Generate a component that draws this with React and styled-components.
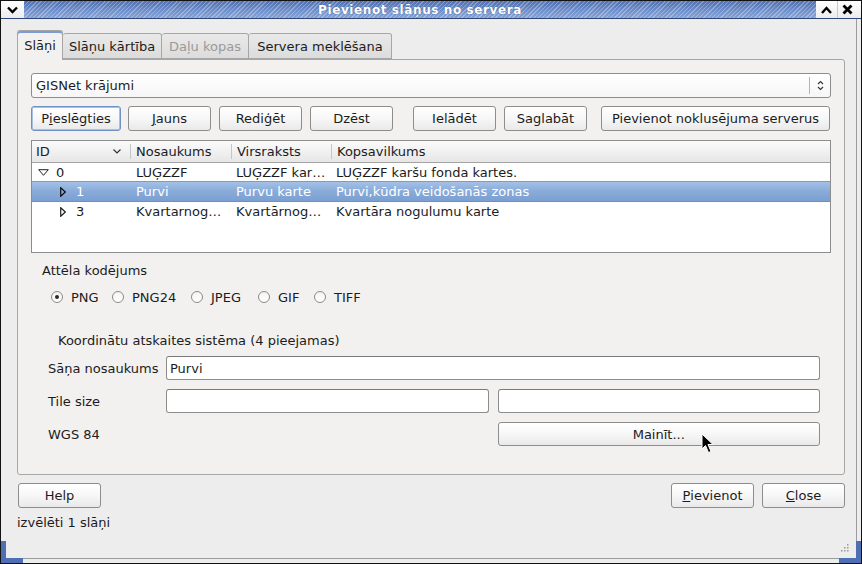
import React from 'react';
import styled, { createGlobalStyle } from 'styled-components';

const GlobalStyle = createGlobalStyle`
  html, body { margin: 0; padding: 0; overflow: hidden; background: #ededed; }
  body {
    font-family: "DejaVu Sans", "Liberation Sans", sans-serif;
    font-size: 13px;
    color: #1c1c1c;
  }
  * { box-sizing: border-box; }
`;

const Window = styled.div`
  position: relative;
  width: 862px;
  height: 564px;
  border: 1px solid #121212;
  background: #ededed;
  display: flex;
  flex-direction: column;
  overflow: hidden;
`;

const TitleBar = styled.div`
  height: 18px;
  display: flex;
  border-bottom: 1px solid #2e4778;
  flex-shrink: 0;
`;

const TitleButton = styled.div`
  width: ${({ $w }) => $w}px;
  height: 100%;
  background: linear-gradient(#ffffff, #ececec);
  display: flex;
  align-items: center;
  justify-content: center;
  border-left: ${({ $sep }) => ($sep ? '1px solid #c8c8c8' : 'none')};
`;

const TitleStripe = styled.div`
  flex: 1;
  display: flex;
  align-items: center;
  justify-content: center;
  color: #fff;
  font-weight: bold;
  font-size: 12px;
  letter-spacing: 0.6px;
  text-shadow: 0 0 1px #2d4a82;
  background:
    repeating-linear-gradient(135deg, rgba(255, 255, 255, 0.28) 0 1px, rgba(255, 255, 255, 0) 1px 3px),
    linear-gradient(#4f70b2, #6f8fcb 55%, #86a2d6);
`;

const Frame = styled.div`
  flex: 1;
  margin: 0 4px 4px 0;
  border-right: 1px solid #9c9c9c;
  border-bottom: 1px solid #9c9c9c;
  padding: 11px 11px 0 16px;
  display: flex;
  flex-direction: column;
`;

const TabBar = styled.div`
  display: flex;
  align-items: flex-end;
  height: 29px;
  position: relative;
  z-index: 1;
`;

const Tab = styled.div`
  height: ${({ $active }) => ($active ? 30 : 26)}px;
  margin-bottom: ${({ $active }) => ($active ? -1 : 0)}px;
  width: ${({ $w }) => $w}px;
  display: flex;
  align-items: center;
  justify-content: center;
  white-space: nowrap;
  border: 1px solid #a6a6a6;
  border-bottom: ${({ $active }) => ($active ? 'none' : '1px solid #a6a6a6')};
  border-left: ${({ $first, $active }) => ($first || $active ? '1px solid #a6a6a6' : 'none')};
  border-radius: 3px 3px 0 0;
  color: ${({ $disabled }) => ($disabled ? '#9a9a9a' : '#1c1c1c')};
  background: ${({ $active }) =>
    $active ? '#f2f1f0' : 'linear-gradient(#e9e9e9, #dcdcdc)'};
  box-shadow: ${({ $active }) => ($active ? 'inset 0 2px 0 #7a9bd3' : 'none')};
`;

const Pane = styled.div`
  height: 416px;
  border: 1px solid #a6a6a6;
  border-radius: 0 3px 3px 3px;
  background: #f2f1f0;
  padding: 13px 13px 0 13px;
  display: flex;
  flex-direction: column;
`;

const Combo = styled.div`
  height: 25px;
  border: 1px solid #8d8d8d;
  border-radius: 3px;
  background: linear-gradient(#ffffff, #f6f6f6);
  display: flex;
  align-items: center;
  padding-left: 4px;
`;

const ComboText = styled.div`
  flex: 1;
`;

const ComboArrow = styled.div`
  width: 21px;
  height: 17px;
  border-left: 1px solid #b4b4b4;
  display: flex;
  align-items: center;
  justify-content: center;
`;

const ButtonRow = styled.div`
  display: flex;
  margin-top: 8px;
`;

const Button = styled.div`
  height: 25px;
  width: ${({ $w }) => ($w ? `${$w}px` : 'auto')};
  margin-left: ${({ $ml }) => $ml || 0}px;
  padding: 0 6px;
  border: 1px solid ${({ $focus }) => ($focus ? '#6f91c6' : '#8d8d8d')};
  box-shadow: ${({ $focus }) => ($focus ? 'inset 0 0 0 1px #a9c0e4' : 'none')};
  border-radius: 3px;
  background: linear-gradient(#ffffff 0%, #f7f7f7 50%, #e9e9e9 100%);
  display: flex;
  align-items: center;
  justify-content: center;
  white-space: nowrap;
  flex-shrink: 0;
`;

const Tree = styled.div`
  margin-top: 9px;
  height: 113px;
  border: 1px solid #8d8d8d;
  background: #fff;
  display: flex;
  flex-direction: column;
`;

const cols = '98px 101px 100px 1fr';

const HeaderRow = styled.div`
  display: grid;
  grid-template-columns: ${cols};
  height: 22px;
  border-bottom: 1px solid #a3a3a3;
  background: linear-gradient(#fbfbfb, #f1f1f1 50%, #e6e6e6);
`;

const HeaderCell = styled.div`
  position: relative;
  display: flex;
  align-items: center;
  justify-content: space-between;
  padding: 0 9px 0 ${({ $first }) => ($first ? 4 : 6)}px;
  &::before {
    content: '';
    display: ${({ $first }) => ($first ? 'none' : 'block')};
    position: absolute;
    left: 0;
    top: 3px;
    bottom: 3px;
    width: 1px;
    background: #c6c6c6;
  }
`;

const Row = styled.div`
  display: grid;
  grid-template-columns: ${cols};
  color: ${({ $sel }) => ($sel ? '#ffffff' : '#1c1c1c')};
  background: ${({ $sel }) => ($sel ? 'linear-gradient(#a4c0e6, #88abd9 50%, #7b9fd1)' : 'transparent')};
  border-top: 1px solid ${({ $sel }) => ($sel ? '#7c9ccc' : 'transparent')};
  border-bottom: 1px solid ${({ $sel }) => ($sel ? '#6e8fc2' : 'transparent')};
  margin-top: ${({ $sel }) => ($sel ? -1 : 0)}px;
  height: ${({ $sel }) => ($sel ? 21 : 19)}px;
`;

const Cell = styled.div`
  display: flex;
  align-items: center;
  padding-left: ${({ $pad }) => $pad}px;
  white-space: nowrap;
  overflow: hidden;
`;

const Expander = styled.span`
  width: 14px;
  display: inline-flex;
  justify-content: center;
  margin-right: 6px;
`;

const GroupLabel = styled.div`
  margin: ${({ $mt }) => $mt}px 0 0 ${({ $ml }) => $ml}px;
  height: 16px;
  line-height: 16px;
`;

const RadioRow = styled.div`
  display: flex;
  margin: 10px 0 0 20px;
  height: 16px;
  align-items: center;
`;

const RadioItem = styled.div`
  width: ${({ $w }) => ($w ? `${$w}px` : 'auto')};
  display: flex;
  align-items: center;
  gap: 8px;
`;

const RadioCircle = styled.span`
  width: 12px;
  height: 12px;
  border-radius: 50%;
  border: 1px solid #8a8a8a;
  background: linear-gradient(#f4f4f4, #ffffff);
  display: flex;
  align-items: center;
  justify-content: center;
  &::after {
    content: '';
    display: ${({ $on }) => ($on ? 'block' : 'none')};
    width: 4px;
    height: 4px;
    border-radius: 50%;
    background: #2a2a2a;
  }
`;

const Form = styled.div`
  display: grid;
  grid-template-columns: 109px 1fr 1fr;
  grid-auto-rows: 24px;
  column-gap: 9px;
  row-gap: 9px;
  margin: 7px 11px 0 17px;
`;

const FormLabel = styled.div`
  display: flex;
  align-items: center;
  white-space: nowrap;
`;

const Input = styled.div`
  grid-column: ${({ $span }) => ($span ? 'span 2' : 'auto')};
  border: 1px solid #8d8d8d;
  border-top-color: #7a7a7a;
  border-radius: 3px;
  background: #fff;
  display: flex;
  align-items: center;
  padding-left: 3px;
`;

const WideButton = styled(Button)`
  grid-column: 3;
  height: 24px;
  position: relative;
`;

const Cursor = styled.svg`
  position: absolute;
  left: 202px;
  top: 10px;
`;

const Footer = styled.div`
  display: flex;
  margin-top: 8px;
  padding-left: 1px;
`;

const Spacer = styled.div`
  flex: 1;
`;

const Status = styled.div`
  margin: 7px 0 0 0;
  height: 16px;
  line-height: 16px;
`;

const Corner = styled.div`
  position: absolute;
  bottom: 0;
  ${({ $side }) => $side}: 0;
  width: 22px;
  height: 22px;
  border-bottom: 5px solid #4f6fb4;
  border-${({ $side }) => $side}: 5px solid #4f6fb4;
`;

const Grip = styled.svg`
  position: absolute;
  right: 11px;
  bottom: 10px;
`;

const Chevron = ({ up }) => (
  <svg width="11" height="8" viewBox="0 0 11 8">
    <path
      d={up ? 'M1 7 L5.5 2 L10 7' : 'M1 1.5 L5.5 6 L10 1.5'}
      fill="none"
      stroke="#000"
      strokeWidth="2.4"
    />
  </svg>
);

const CloseX = () => (
  <svg width="11" height="11" viewBox="0 0 11 11">
    <path d="M1.5 1.5 L9.5 9.5 M9.5 1.5 L1.5 9.5" stroke="#000" strokeWidth="2.8" />
  </svg>
);

const TriDown = () => (
  <svg width="11" height="7" viewBox="0 0 11 7">
    <path d="M0.7 0.7 H10.3 L5.5 6.3 Z" fill="#fff" stroke="#222" strokeWidth="1" />
  </svg>
);

const TriRight = ({ color }) => (
  <svg width="6" height="10" viewBox="0 0 6 10">
    <path d="M0.7 0.7 L5.3 5 L0.7 9.3 Z" fill="none" stroke={color} strokeWidth="1.2" />
  </svg>
);

const rows = [
  { id: '0', depth: 0, open: true, name: 'LUĢZZF', title: 'LUĢZZF kar…', abs: 'LUĢZZF karšu fonda kartes.' },
  { id: '1', depth: 1, name: 'Purvi', title: 'Purvu karte', abs: 'Purvi,kūdra veidošanās zonas', sel: true },
  { id: '3', depth: 1, name: 'Kvartarnog…', title: 'Kvartārnog…', abs: 'Kvartāra nogulumu karte' },
];

const radios = [
  { label: 'PNG', w: 61, on: true },
  { label: 'PNG24', w: 79 },
  { label: 'JPEG', w: 67 },
  { label: 'GIF', w: 56 },
  { label: 'TIFF' },
];

const tabs = [
  { label: 'Slāņi', w: 46, active: true },
  { label: 'Slāņu kārtība', w: 99 },
  { label: 'Daļu kopas', w: 87, disabled: true },
  { label: 'Servera meklēšana', w: 143 },
];

export default function App() {
  return (
    <>
      <GlobalStyle />
      <Window>
        <TitleBar>
          <TitleButton $w={23}>
            <Chevron />
          </TitleButton>
          <TitleStripe>Pievienot slāņus no servera</TitleStripe>
          <TitleButton $w={21}>
            <Chevron up />
          </TitleButton>
          <TitleButton $w={20} $sep>
            <CloseX />
          </TitleButton>
          <TitleButton $w={4} />
        </TitleBar>
        <Frame>
          <TabBar>
            {tabs.map((t, i) => (
              <Tab key={t.label} $w={t.w} $active={t.active} $disabled={t.disabled} $first={i === 0}>
                {t.label}
              </Tab>
            ))}
          </TabBar>
          <Pane>
            <Combo>
              <ComboText>ĢISNet krājumi</ComboText>
              <ComboArrow>
                <svg width="7" height="11" viewBox="0 0 7 11">
                  <path d="M1 4 L3.5 1.5 L6 4 M1 7 L3.5 9.5 L6 7" fill="none" stroke="#333" strokeWidth="1.1" />
                </svg>
              </ComboArrow>
            </Combo>
            <ButtonRow>
              <Button $w={90} $focus>P<u>i</u>eslēgties</Button>
              <Button $w={83} $ml={7}><u>J</u>auns</Button>
              <Button $w={83} $ml={8}>Rediģēt</Button>
              <Button $w={83} $ml={8}>Dzēst</Button>
              <Button $w={83} $ml={20}>Ielādēt</Button>
              <Button $w={83} $ml={8}>Saglabāt</Button>
              <Button $w={229} $ml={14}>Pievienot noklusējuma serverus</Button>
            </ButtonRow>
            <Tree>
              <HeaderRow>
                <HeaderCell $first>
                  ID
                  <svg width="8" height="5" viewBox="0 0 8 5">
                    <path d="M0.5 0.5 L4 4 L7.5 0.5" fill="none" stroke="#333" strokeWidth="1.2" />
                  </svg>
                </HeaderCell>
                <HeaderCell>Nosaukums</HeaderCell>
                <HeaderCell>Virsraksts</HeaderCell>
                <HeaderCell>Kopsavilkums</HeaderCell>
              </HeaderRow>
              {rows.map((r) => (
                <Row key={r.id} $sel={r.sel}>
                  <Cell $pad={4 + r.depth * 20}>
                    <Expander>
                      {r.open ? <TriDown /> : <TriRight color={r.sel ? '#111' : '#222'} />}
                    </Expander>
                    {r.id}
                  </Cell>
                  <Cell $pad={6}>{r.name}</Cell>
                  <Cell $pad={5}>{r.title}</Cell>
                  <Cell $pad={5}>{r.abs}</Cell>
                </Row>
              ))}
            </Tree>
            <GroupLabel $mt={10} $ml={11}>Attēla kodējums</GroupLabel>
            <RadioRow>
              {radios.map((r) => (
                <RadioItem key={r.label} $w={r.w}>
                  <RadioCircle $on={r.on} />
                  {r.label}
                </RadioItem>
              ))}
            </RadioRow>
            <GroupLabel $mt={28} $ml={27}>Koordinātu atskaites sistēma (4 pieejamas)</GroupLabel>
            <Form>
              <FormLabel>Sāņa nosaukums</FormLabel>
              <Input $span>Purvi</Input>
              <FormLabel>Tile size</FormLabel>
              <Input />
              <Input />
              <FormLabel>WGS 84</FormLabel>
              <WideButton>
                Mainīt...
                <Cursor width="13" height="21" viewBox="0 0 13 21">
                  <path
                    d="M1 1 L1 16 L4.5 12.5 L7.5 19.5 L10 18.5 L7 11.5 L12 11.5 Z"
                    fill="#000"
                    stroke="#fff"
                    strokeWidth="1"
                    strokeLinejoin="round"
                  />
                </Cursor>
              </WideButton>
            </Form>
          </Pane>
          <Footer>
            <Button $w={83}>Help</Button>
            <Spacer />
            <Button $w={83}><u>P</u>ievienot</Button>
            <Button $w={83} $ml={8}><u>C</u>lose</Button>
          </Footer>
          <Status>izvēlēti 1 slāņi</Status>
        </Frame>
        <Corner $side="left" />
        <Corner $side="right" />
        <Grip width="9" height="9" viewBox="0 0 9 9">
          {[0, 1, 2].flatMap((i) =>
            [0, 1, 2]
              .filter((j) => i + j >= 2)
              .map((j) => <rect key={`${i}${j}`} x={j * 3} y={i * 3} width="1.5" height="1.5" fill="#9a9a9a" />)
          )}
        </Grip>
      </Window>
    </>
  );
}
